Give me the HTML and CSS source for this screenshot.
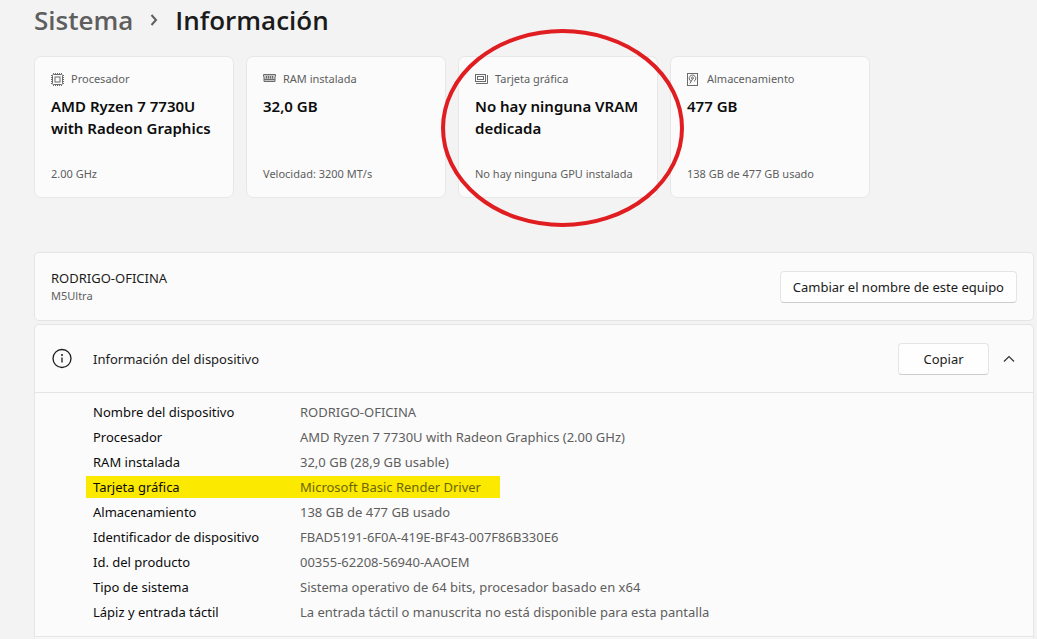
FILE: index.html
```html
<!DOCTYPE html>
<html lang="es">
<head>
<meta charset="utf-8">
<meta name="viewport" content="width=device-width, initial-scale=1">
<title>Información</title>
<link rel="stylesheet" href="styles.css">
</head>
<body>
<main class="page">
  <nav class="crumbs" aria-label="Ruta">
    <a class="crumb-link" href="#">Sistema</a>
    <svg class="crumb-arrow" viewBox="0 0 10 12" aria-hidden="true"><path d="M2.500 1l4.500 5-4.500 5"/></svg>
    <h1 class="crumb-current">Información</h1>
  </nav>

  <section class="cards">
    <article class="card">
      <h2 class="card-label">
        <svg class="icon" viewBox="0 0 13 13" aria-hidden="true"><rect x="1.500" y="1.500" width="10" height="10" rx="1"/><rect x="4" y="4" width="5" height="5"/><path stroke-dasharray="1 1" d="M2 .5h9M2 12.500h9M.5 2v9M12.500 2v9"/></svg>
        Procesador
      </h2>
      <p class="card-value">AMD Ryzen 7 7730U with Radeon Graphics</p>
      <p class="card-note">2.00 GHz</p>
    </article>
    <article class="card">
      <h2 class="card-label">
        <svg class="icon" viewBox="0 0 13 13" aria-hidden="true"><path class="tint" d="M.5 1.500h12v2l-.5.5v4.500H1V4l-.5-.5z"/><path d="M1 6.500h11M3.500 3v2.500M5.500 3v2.500M7.500 3v2.500M9.500 3v2.500"/></svg>
        RAM instalada
      </h2>
      <p class="card-value">32,0 GB</p>
      <p class="card-note">Velocidad: 3200 MT/s</p>
    </article>
    <article class="card card-marked">
      <h2 class="card-label">
        <svg class="icon" viewBox="0 0 13 13" aria-hidden="true"><rect x=".5" y="1.500" width="10" height="7"/><rect x="2.500" y="3.500" width="6" height="3"/><path d="M12.500 2v8.500H1"/></svg>
        Tarjeta gráfica
      </h2>
      <p class="card-value">No hay ninguna VRAM dedicada</p>
      <p class="card-note">No hay ninguna GPU instalada</p>
      <svg class="ring" viewBox="0 0 244 200" aria-hidden="true"><ellipse cx="121.500" cy="100" rx="119.500" ry="97"/></svg>
    </article>
    <article class="card">
      <h2 class="card-label">
        <svg class="icon" viewBox="0 0 13 13" aria-hidden="true"><rect x=".5" y=".5" width="10" height="12"/><path d="M4 8.300A3.300 3.300 0 1 1 7 8.300"/><circle cx="5.500" cy="5" r="1"/><path d="M5.500 6L3 10.500"/></svg>
        Almacenamiento
      </h2>
      <p class="card-value">477 GB</p>
      <p class="card-note">138 GB de 477 GB usado</p>
    </article>
  </section>

  <section class="panel device">
    <div class="device-name">
      <p class="name">RODRIGO-OFICINA</p>
      <p class="model">M5Ultra</p>
    </div>
    <button class="btn" type="button">Cambiar el nombre de este equipo</button>
  </section>

  <section class="panel panel-open">
    <header class="info-head">
      <svg class="info-icon" viewBox="0 0 20 20" aria-hidden="true"><circle cx="10" cy="9.500" r="9"/><path d="M10 8.500v5"/><circle class="dot" cx="10" cy="6" r="1"/></svg>
      <h2 class="info-title">Información del dispositivo</h2>
      <button class="btn btn-copy" type="button">Copiar</button>
      <button class="collapse" type="button" aria-label="Contraer"><svg class="chevron" viewBox="0 0 12 8" aria-hidden="true"><path d="M1 6.500l5-5 5 5"/></svg></button>
    </header>
    <table class="specs">
      <tbody>
        <tr><th scope="row">Nombre del dispositivo</th><td>RODRIGO-OFICINA</td></tr>
        <tr><th scope="row">Procesador</th><td>AMD Ryzen 7 7730U with Radeon Graphics (2.00 GHz)</td></tr>
        <tr><th scope="row">RAM instalada</th><td>32,0 GB (28,9 GB usable)</td></tr>
        <tr class="marked"><th scope="row">Tarjeta gráfica</th><td>Microsoft Basic Render Driver</td></tr>
        <tr><th scope="row">Almacenamiento</th><td>138 GB de 477 GB usado</td></tr>
        <tr><th scope="row">Identificador de dispositivo</th><td>FBAD5191-6F0A-419E-BF43-007F86B330E6</td></tr>
        <tr><th scope="row">Id. del producto</th><td>00355-62208-56940-AAOEM</td></tr>
        <tr><th scope="row">Tipo de sistema</th><td>Sistema operativo de 64 bits, procesador basado en x64</td></tr>
        <tr><th scope="row">Lápiz y entrada táctil</th><td>La entrada táctil o manuscrita no está disponible para esta pantalla</td></tr>
      </tbody>
    </table>
    <div class="panel-foot"></div>
  </section>
</main>
</body>
</html>
```

FILE: styles.css
```css
* { box-sizing: border-box; margin: 0; }

body {
  background: #f3f3f3;
  color: #1b1b1b;
  font: 13px/20px "Noto Sans", "Open Sans", sans-serif;
}

.page { padding: 2px 3px 0 34px; }

.crumbs {
  display: flex;
  align-items: center;
  gap: 16px;
  height: 36px;
  font-family: "Open Sans", "Noto Sans", sans-serif;
  font-size: 26px;
  line-height: 36px;
}
.crumb-link { color: #5e5e5e; font-weight: 600; text-decoration: none; }
.crumb-arrow { width: 10px; height: 12px; fill: none; stroke: #5e5e5e; stroke-width: 2; }
.crumb-current { font-size: inherit; font-weight: 600; }

.cards {
  display: grid;
  grid-template-columns: repeat(4, 200px);
  gap: 12px;
  margin-top: 18px;
}
.card {
  display: flex;
  flex-direction: column;
  min-height: 142px;
  padding: 12px 16px 13px;
  background: #fbfbfb;
  border: 1px solid #e7e7e7;
  border-radius: 7px;
}
.card-marked { position: relative; }
.card-label {
  display: flex;
  align-items: center;
  gap: 7px;
  color: #5e5e5e;
  font-size: 11px;
  font-weight: 400;
  line-height: 20px;
}
.icon { width: 13px; height: 13px; fill: none; stroke: #6b6b6b; }
.icon .tint { fill: #c4c4c4; }
.card-value { margin-top: 6px; color: #0c0c0c; font-size: 15px; font-weight: 600; line-height: 22px; }
.card-note { margin-top: auto; color: #5e5e5e; font-size: 11px; line-height: 20px; white-space: nowrap; }
.ring {
  position: absolute;
  left: -18px;
  top: -29px;
  width: 244px;
  height: 200px;
  fill: none;
  stroke: #e01e22;
  stroke-width: 4;
  z-index: 1;
  pointer-events: none;
}

.panel { background: #fbfbfb; border: 1px solid #e5e5e5; border-radius: 5px; }
.panel-open { border-bottom: 0; border-radius: 5px 5px 0 0; }
.device {
  display: flex;
  align-items: center;
  justify-content: space-between;
  min-height: 69px;
  margin: 54px 0 3px;
  padding: 0 16px;
}
.name { line-height: 18px; }
.model { color: #5e5e5e; font-size: 11px; line-height: 17px; }

.btn {
  height: 32px;
  padding: 0 12px;
  background: #fefefe;
  border: 1px solid #e5e5e5;
  border-bottom-color: #cccccc;
  border-radius: 4px;
  color: inherit;
  font: inherit;
}
.btn-copy { width: 91px; }

.info-head {
  display: flex;
  align-items: center;
  min-height: 68px;
  padding: 0 16px 0 17px;
  border-bottom: 1px solid #e5e5e5;
}
.info-icon { width: 20px; height: 20px; fill: none; stroke: #1b1b1b; stroke-width: 1.3; overflow: visible; }
.info-icon .dot { fill: #1b1b1b; stroke: none; }
.info-title { flex: 1; margin-left: 21px; font-size: 13px; font-weight: 400; }
.collapse { display: flex; margin-left: 12px; padding: 2px; background: none; border: 0; }
.chevron { width: 12px; height: 8px; fill: none; stroke: #333; stroke-width: 1.2; }

.specs { margin: 6px 0 12px 51px; border-collapse: collapse; text-align: left; }
.specs th { width: 214px; height: 25px; padding: 0 0 0 7px; color: #0c0c0c; font-weight: 400; }
.specs td { padding: 0; color: #5e5e5e; }
.marked { background: linear-gradient(#fce900, #fce900) left center / 414px 22px no-repeat; }
.specs .marked td { color: #6b6500; }
.panel-foot { height: 2px; border-top: 1px solid #e5e5e5; }
```
